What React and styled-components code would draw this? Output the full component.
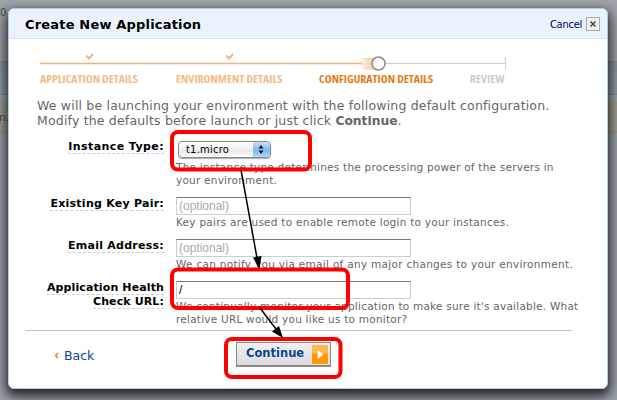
import React from "react";
import styled, { createGlobalStyle } from "styled-components";

const Global = createGlobalStyle`
  * { box-sizing: border-box; }
  body { margin: 0; overflow: hidden; }
`;

const Page = styled.main`
  position: relative;
  width: 617px;
  height: 400px;
  padding: 8px;
  overflow: hidden;
  font-family: "DejaVu Sans", Verdana, sans-serif;
  background: linear-gradient(#9fa5ab 0, #9b9fa4 61px, #75808b 61px, #8a939d 62px, #919aa4 94px, #6f7780 94px, #9aa1a9 95px, #9aa1ab 400px);
`;

const Backdrop = styled.div`
  position: absolute;
  inset: 0;
  font-size: 12px;
  color: #4c4c4c;
`;

const Band = styled.div`
  position: absolute;
  left: 0;
  right: 0;
  top: 102px;
  height: 31px;
  border: solid #a88f76;
  border-width: 1px 0;
  background: #9e9d95;
  font-size: 11px;
  line-height: 30px;
  text-indent: -1px;
`;

const Count = styled.span`
  position: absolute;
  left: 0;
  top: 6px;
  font-size: 10px;
  line-height: 14px;
`;

const Dialog = styled.section`
  position: relative;
  width: 600px;
  height: 381px;
  border: 1px solid #a9cfea;
  border-radius: 6px;
  background: #fff;
  box-shadow: 0 5px 12px 2px rgba(0, 0, 0, 0.8);
  display: flex;
  flex-direction: column;
`;

const Header = styled.header`
  height: 30px;
  flex: none;
  display: flex;
  align-items: center;
  justify-content: space-between;
  padding: 0 7px 0 16px;
  border-bottom: 1px solid #cfe4f7;
  border-radius: 5px 5px 0 0;
  background: #eaf2fe;
`;

const Title = styled.h1`
  margin: 3px 0 0;
  font-size: 13px;
  line-height: 16px;
  letter-spacing: 0.18px;
  color: #000;
`;

const Cancel = styled.button`
  display: flex;
  align-items: center;
  gap: 4px;
  margin-top: 1px;
  padding: 0;
  border: 0;
  background: none;
  font: 10px/13px "DejaVu Sans", Verdana, sans-serif;
  letter-spacing: -0.3px;
  color: #000066;
`;

const Steps = styled.div`
  height: 48px;
  flex: none;
  padding: 13px 0 0 31px;
`;

const Track = styled.svg`
  display: block;
`;

const StepLabels = styled.div`
  display: grid;
  grid-template-columns: 136px 143px 151px 40px;
  font: 700 10.8px/12px "Open Sans", sans-serif;
  font-stretch: 75%;
`;

const StepLabel = styled.span`
  justify-self: start;
  white-space: nowrap;
  transform: scaleX(1.09);
  transform-origin: left;
  color: ${(p) => p.$color};
`;

const Intro = styled.p`
  margin: 11px 0 0 28px;
  font-size: 12.5px;
  line-height: 15px;
  letter-spacing: 0.18px;
  white-space: nowrap;
  color: #666;
  b { font-size: 12.3px; letter-spacing: 0; }
`;

const Form = styled.form`
  display: grid;
  grid-template-columns: 155px 1fr;
  column-gap: 12px;
  grid-template-rows: 57px 42px 42px 49px;
  margin-top: 11px;
`;

const Label = styled.label`
  text-align: right;
  font-size: 11px;
  font-weight: 700;
  line-height: 13px;
  letter-spacing: ${(p) => p.$spacing ?? 0.25}px;
  color: #000;
  span {
    display: inline-block;
    border-bottom: 1px dashed #ccc;
    line-height: 13px;
  }
`;

const Help = styled.p`
  margin: ${(p) => p.$offset ?? 1}px 0 0;
  font-size: 10.5px;
  line-height: 13px;
  letter-spacing: ${(p) => p.$spacing ?? 0.26}px;
  white-space: nowrap;
  color: #666;
`;

const Input = styled.input`
  display: block;
  width: 235px;
  height: 18px;
  padding: 0 2px;
  border: 1px solid #ccc;
  border-top: 1px solid #777;
  border-radius: 0;
  background: #fff;
  font: 12px "Liberation Sans", Arial, sans-serif;
  color: #000;
  &::placeholder { color: #aaa; opacity: 1; }
`;

const Select = styled.div`
  display: flex;
  width: 93px;
  height: 17px;
  margin: 1px 0 4px 2px;
  border: 1px solid #8a8a8a;
  border-radius: 4px;
  overflow: hidden;
  background: linear-gradient(#fff, #f0f0f0 50%, #e6e6e6 51%, #fafafa);
  box-shadow: 0 1px 1px #aaa;
  font-size: 10px;
  letter-spacing: 0.2px;
  line-height: 16px;
  padding-left: 7px;
  justify-content: space-between;
  color: #000;
`;

const Footer = styled.footer`
  margin: 0 35px 0 16px;
  border-top: 1px solid #c4c4c4;
  display: flex;
  align-items: flex-start;
`;

const Back = styled.a`
  display: flex;
  align-items: center;
  gap: 5px;
  width: 211px;
  padding: 17px 0 0 29px;
  font-size: 12.5px;
  line-height: 15px;
  color: #0a4590;
`;

const Continue = styled.button`
  display: flex;
  align-items: center;
  justify-content: space-between;
  width: 95px;
  height: 25px;
  margin-top: 11px;
  padding: 0 2px 0 9px;
  border: 1px solid #888;
  border-bottom-width: 2px;
  background: linear-gradient(#f0f0f2, #dcdcde);
  font: 700 11.5px/18px "DejaVu Sans", sans-serif;
  color: #0a4590;
  span { padding-bottom: 2px; }
`;

const Annotations = styled.svg`
  position: absolute;
  inset: 0;
`;

export default function App() {
  return (
    <Page>
      <Global />
      <Backdrop>
        <Count>0</Count>
        <Band>n.</Band>
      </Backdrop>
      <Dialog>
        <Header>
          <Title>Create New Application</Title>
          <Cancel>
            Cancel
            <svg width="14" height="14" viewBox="0 0 14 14">
              <rect x=".5" y=".5" width="13" height="13" fill="#f0f0ee" stroke="#aaa" />
              <path d="M4.5 4.5l5 5M9.5 4.5l-5 5" stroke="#444" strokeWidth="1.5" />
            </svg>
          </Cancel>
        </Header>
        <Steps>
          <Track width="470" height="21" viewBox="40 52 470 21">
            <defs>
              <linearGradient id="trail">
                <stop offset="0" stopColor="#f4a04c" stopOpacity="0" />
                <stop offset="1" stopColor="#f4b070" />
              </linearGradient>
            </defs>
            <path d="M40 63.5H362" stroke="#f3b482" strokeWidth="1.4" />
            <path d="M385 63.5H505M505.5 57V70" stroke="#ccc" fill="none" />
            <path d="M362 58h16v2h-16zM359 60.500h18v2h-18zM358 63h18v2h-18zM360 65.500h17v2h-17zM363 68h13v1.500h-13z" fill="url(#trail)" />
            <circle cx="378.5" cy="63.5" r="6.5" fill="#fff" stroke="#8c8c8c" strokeWidth="1.5" />
            <path d="M86.5 55.500l2.5 3 4-4.500M226.500 55.500l2.500 3 4-4.500" stroke="#f3b482" strokeWidth="2" fill="none" />
          </Track>
          <StepLabels>
            <StepLabel $color="#f3bb87">APPLICATION DETAILS</StepLabel>
            <StepLabel $color="#f3bb87">ENVIRONMENT DETAILS</StepLabel>
            <StepLabel $color="#e37b16">CONFIGURATION DETAILS</StepLabel>
            <StepLabel $color="#ccc">REVIEW</StepLabel>
          </StepLabels>
        </Steps>
        <Intro>
          We will be launching your environment with the following default configuration.
          <br />
          Modify the defaults before launch or just click <b>Continue</b>.
        </Intro>
        <Form>
          <Label $spacing={0.42}><span>Instance Type:</span></Label>
          <div>
            <Select>
              t1.micro
              <svg width="17" height="16" viewBox="0 0 17 16">
                <defs>
                  <linearGradient id="blue" x2="0" y2="1">
                    <stop offset="0" stopColor="#c9e2fa" />
                    <stop offset=".5" stopColor="#7db6ee" />
                    <stop offset="1" stopColor="#b0e0ff" />
                  </linearGradient>
                </defs>
                <path d="M0 0H17V16H0z" fill="url(#blue)" />
                <path d="M8 3l2.500 3.500h-5zM8 12l2.500-3.500h-5z" fill="#111" />
              </svg>
            </Select>
            <Help $offset={-1} $spacing={0.23}>The instance type determines the processing power of the servers in<br />your environment.</Help>
          </div>
          <Label><span>Existing Key Pair:</span></Label>
          <div>
            <Input placeholder="(optional)" />
            <Help>Key pairs are used to enable remote login to your instances.</Help>
          </div>
          <Label><span>Email Address:</span></Label>
          <div>
            <Input placeholder="(optional)" />
            <Help $spacing={0.29}>We can notify you via email of any major changes to your environment.</Help>
          </div>
          <Label $spacing={0.12}><span>Application Health</span><br /><span>Check URL:</span></Label>
          <div>
            <Input defaultValue="/" />
            <Help $spacing={0.23}>We continually monitor your application to make sure it's available. What<br />relative URL would you like us to monitor?</Help>
          </div>
        </Form>
        <Footer>
          <Back>
            <svg width="5" height="7" viewBox="0 0 5 7">
              <path d="M4 1L1.500 3.500 4 6" stroke="#e8773f" strokeWidth="1.500" fill="none" />
            </svg>
            Back
          </Back>
          <Continue>
            <span>Continue</span>
            <svg width="16" height="19" viewBox="0 0 17 20">
              <path d="M0 0H17V20H0z" fill="#f90" />
              <path d="M0 0H17V9H0z" fill="#ffb84d" />
              <path d="M6 5l6 5-6 5z" fill="#fff" />
            </svg>
          </Continue>
        </Footer>
      </Dialog>
      <Annotations width="617" height="400">
        <g fill="none" stroke="#f00" strokeWidth="4">
          <rect x="172" y="132" width="138" height="37.500" rx="6" />
          <rect x="172" y="269.500" width="176" height="38.500" rx="6" />
          <rect x="226" y="339" width="114.500" height="38" rx="6" />
        </g>
        <path d="M241 170L257 258M260 308L276 329" stroke="#000" strokeWidth="1.500" />
        <path d="M259.500 269L253 257.500L261.500 256zM283 338L272 331.500L279 326z" />
      </Annotations>
    </Page>
  );
}
